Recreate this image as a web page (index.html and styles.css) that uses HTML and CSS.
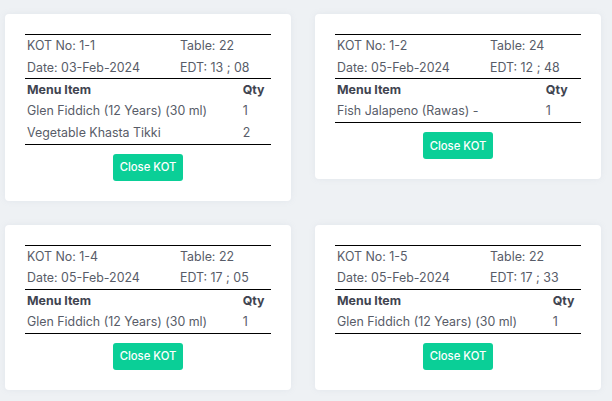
FILE: index.html
```html
<!DOCTYPE html>
<html>
<head>
<meta charset="utf-8">
<link rel="stylesheet" href="styles.css">
</head>
<body>
<div class="grid">
  <div class="card">
    <div class="info">
      <span>KOT No: 1-1</span><span>Table: 22</span>
      <span>Date: 03-Feb-2024</span><span>EDT: 13 ; 08</span>
    </div>
    <table class="items">
      <tr><th>Menu Item</th><th>Qty</th></tr>
      <tr><td>Glen Fiddich (12 Years) (30 ml)</td><td>1</td></tr>
      <tr><td>Vegetable Khasta Tikki</td><td>2</td></tr>
    </table>
    <div class="actions"><button class="btn">Close KOT</button></div>
  </div>
  <div class="card">
    <div class="info">
      <span>KOT No: 1-2</span><span>Table: 24</span>
      <span>Date: 05-Feb-2024</span><span>EDT: 12 ; 48</span>
    </div>
    <table class="items">
      <tr><th>Menu Item</th><th>Qty</th></tr>
      <tr><td>Fish Jalapeno (Rawas) -</td><td>1</td></tr>
    </table>
    <div class="actions"><button class="btn">Close KOT</button></div>
  </div>
  <div class="card">
    <div class="info">
      <span>KOT No: 1-4</span><span>Table: 22</span>
      <span>Date: 05-Feb-2024</span><span>EDT: 17 ; 05</span>
    </div>
    <table class="items">
      <tr><th>Menu Item</th><th>Qty</th></tr>
      <tr><td>Glen Fiddich (12 Years) (30 ml)</td><td>1</td></tr>
    </table>
    <div class="actions"><button class="btn">Close KOT</button></div>
  </div>
  <div class="card">
    <div class="info">
      <span>KOT No: 1-5</span><span>Table: 22</span>
      <span>Date: 05-Feb-2024</span><span>EDT: 17 ; 33</span>
    </div>
    <table class="items">
      <tr><th>Menu Item</th><th>Qty</th></tr>
      <tr><td>Glen Fiddich (12 Years) (30 ml)</td><td>1</td></tr>
    </table>
    <div class="actions"><button class="btn">Close KOT</button></div>
  </div>
</div>
</body>
</html>
```

FILE: styles.css
```css
html, body {
  margin: 0;
  padding: 0;
  background: #eef1f4;
}
body {
  font-family: Inter, "Noto Sans", sans-serif;
  font-size: 12.4px;
  color: #585c68;
}
.grid {
  display: grid;
  grid-template-columns: 286px 286px;
  column-gap: 24px;
  row-gap: 24px;
  padding: 14px 11px 13px 5px;
  align-items: start;
}
.card {
  background: #fff;
  border-radius: 4px;
  padding: 20px;
  box-shadow: 0 0 6px rgba(150, 160, 180, 0.12);
}
.info {
  display: grid;
  grid-template-columns: 153px 1fr;
  border-top: 1px solid #000;
  border-bottom: 1px solid #000;
}
.info span {
  height: 21.5px;
  line-height: 21.5px;
  padding: 0 2px;
}
.items {
  width: 100%;
  border-collapse: collapse;
  border-bottom: 1px solid #000;
}
.items th, .items td {
  height: 21.6px;
  line-height: 18px;
  padding: 0 2px;
  text-align: left;
  vertical-align: middle;
}
.items th {
  font-weight: 700;
  color: #3f4450;
}
.actions {
  display: flex;
  justify-content: center;
  margin-top: 9px;
}
.btn {
  background: #0acf97;
  border: 0;
  border-radius: 3px;
  color: #fff;
  font-family: Inter, "Noto Sans", sans-serif;
  font-weight: 500;
  font-size: 11.3px;
  width: 70px;
  height: 27px;
  padding: 0;
}
```
